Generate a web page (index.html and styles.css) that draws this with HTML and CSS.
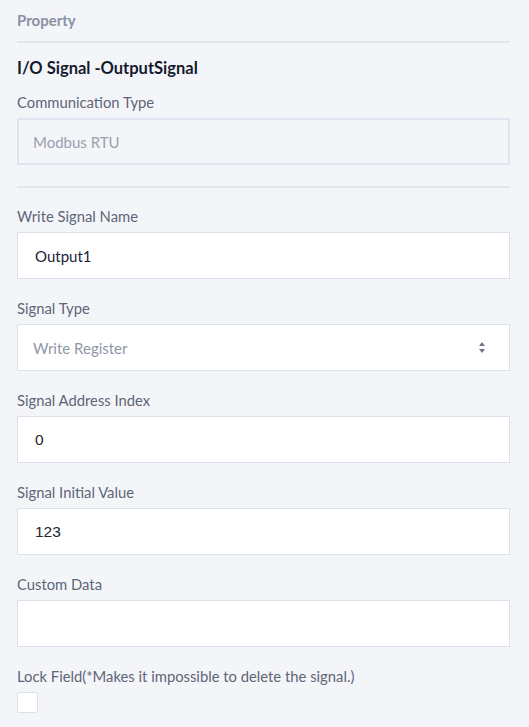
FILE: index.html
```html
<!DOCTYPE html>
<html>
<head>
<meta charset="utf-8">
<link rel="stylesheet" href="styles.css">
</head>
<body>
<div class="panel">
  <div class="panel-header">Property</div>
  <div class="rule"></div>
  <div class="title">I/O Signal -OutputSignal</div>
  <div class="field first">
    <div class="label">Communication Type</div>
    <div class="input disabled">Modbus RTU</div>
  </div>
  <div class="rule rule-mid"></div>
  <div class="field after-rule">
    <div class="label">Write Signal Name</div>
    <div class="input">Output1</div>
  </div>
  <div class="field">
    <div class="label">Signal Type</div>
    <div class="input select">
      <span class="muted">Write Register</span>
      <span class="arrows"><span class="up"></span><span class="down"></span></span>
    </div>
  </div>
  <div class="field">
    <div class="label">Signal Address Index</div>
    <div class="input num">0</div>
  </div>
  <div class="field">
    <div class="label">Signal Initial Value</div>
    <div class="input num">123</div>
  </div>
  <div class="field">
    <div class="label">Custom Data</div>
    <div class="input"></div>
  </div>
  <div class="field">
    <div class="label">Lock Field(*Makes it impossible to delete the signal.)</div>
    <div class="checkbox"></div>
  </div>
</div>
</body>
</html>
```

FILE: styles.css
```css
html, body {
  margin: 0;
  padding: 0;
  background: #f4f5f9;
}
.panel {
  padding: 0 19px 0 17px;
  font-family: Lato, "Open Sans", sans-serif;
  font-size: 14.8px;
}
.panel-header {
  padding: 10px 0 11px;
  line-height: 20px;
  font-weight: 700;
  font-size: 15px;
  color: #8a92a3;
}
.rule {
  height: 2px;
  background: #e3e6ec;
}
.rule-mid {
  margin-top: 21px;
}
.title {
  margin-top: 15px;
  line-height: 20px;
  font-weight: 700;
  font-size: 16.5px;
  color: #141a2e;
}
.field {
  margin-top: 19px;
}
.field.first {
  margin-top: 14px;
}
.field.after-rule {
  margin-top: 18px;
}
.label {
  line-height: 20px;
  margin-bottom: 6px;
  color: #5d6677;
  font-size: 14.8px;
}
.input {
  box-sizing: border-box;
  height: 47px;
  border: 1px solid #dbe1ea;
  background: #ffffff;
  padding: 0 16px 0 17px;
  display: flex;
  align-items: center;
  color: #1c2238;
  font-size: 15px;
}
.input.disabled {
  background: #f4f5f9;
  color: #9aa1ad;
  border-width: 2px;
  border-color: #dfe5ee;
  padding-left: 14px;
}
.input.num {
  font-family: "Liberation Sans", Arial, sans-serif;
  font-size: 15.5px;
  color: #222631;
}
.input.select {
  justify-content: space-between;
  padding-left: 15px;
  padding-right: 24px;
}
.muted {
  color: #8f97a6;
}
.arrows {
  display: flex;
  flex-direction: column;
  gap: 3px;
}
.up, .down {
  width: 0;
  height: 0;
  border-left: 3px solid transparent;
  border-right: 3px solid transparent;
}
.up {
  border-bottom: 4px solid #6f7787;
}
.down {
  border-top: 4px solid #6f7787;
}
.checkbox {
  width: 21px;
  height: 21px;
  box-sizing: border-box;
  background: #fff;
  border: 1px solid #dbe1ea;
  border-radius: 2px;
}
```
